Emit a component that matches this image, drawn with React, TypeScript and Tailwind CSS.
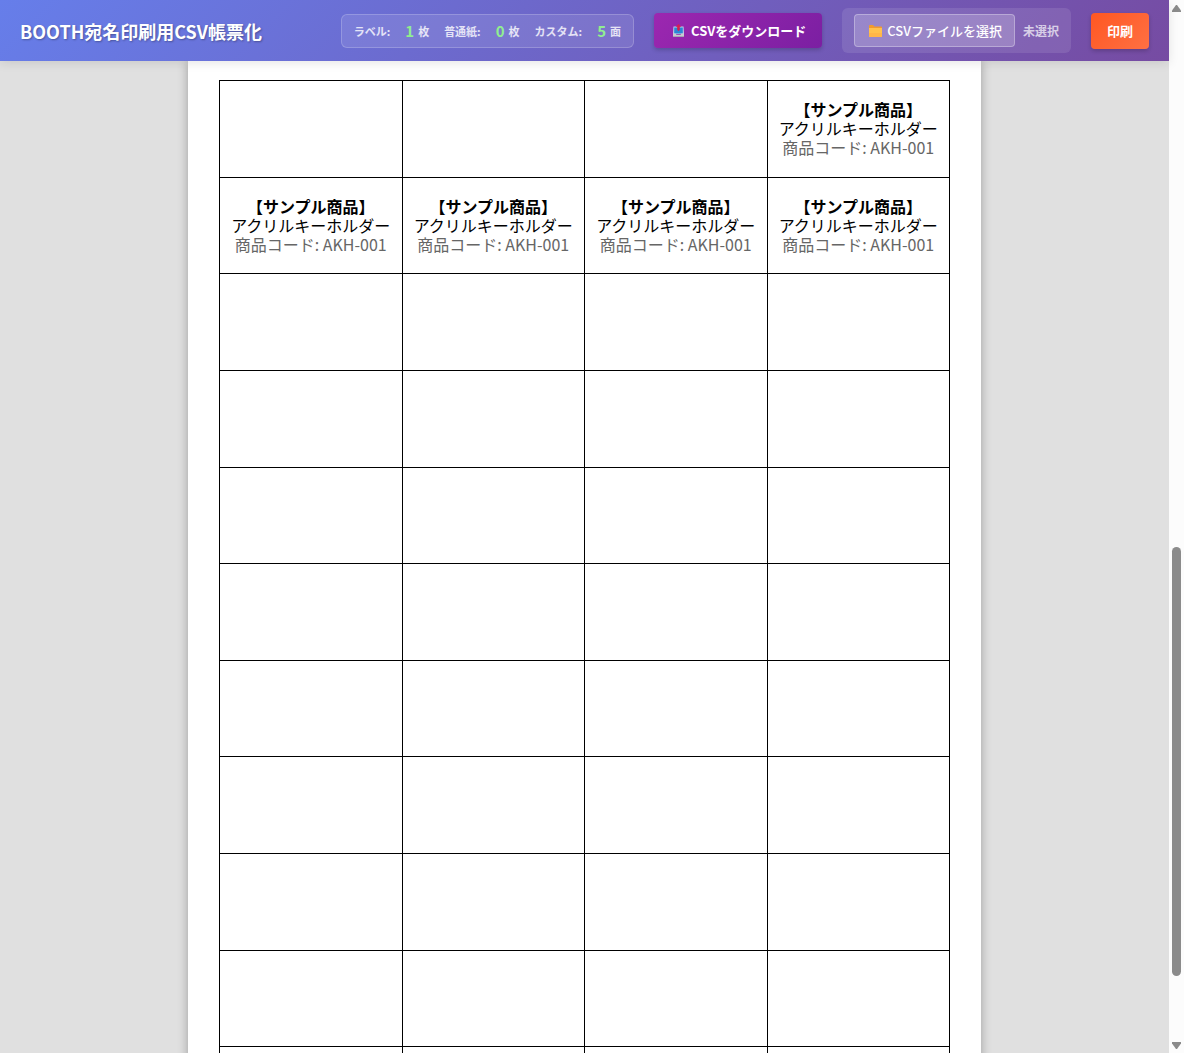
const COLUMNS = 4;
const ROWS = 11;
const SKIPPED = 3;
const CUSTOM_LABELS = 5;

const counts = [
  { label: "ラベル:", value: 1, unit: "枚" },
  { label: "普通紙:", value: 0, unit: "枚" },
  { label: "カスタム:", value: 5, unit: "面" },
];

function OutboxIcon() {
  return (
    <svg className="h-[13px] w-[11px]" viewBox="0 0 11 13" aria-hidden="true">
      <path d="M.5 2.500h10L11 10H0z" fill="#b9d3ea" />
      <path d="M1.200 3.500h8.600V9.500H1.200z" fill="#2b86d6" />
      <path d="M0 9.500h2.500l1 1.200h4l1-1.200H11V13H0z" fill="#c9c9d0" />
      <path d="M0 12h11v1H0z" fill="#a5a7b4" />
      <path d="M5.500 0 8.200 2.800H6.800V6L5.500 7 4.200 6V2.800H2.800z" fill="#d81f4f" />
    </svg>
  );
}

function FolderIcon() {
  return (
    <svg className="h-3 w-[13px]" viewBox="0 0 13 12" aria-hidden="true">
      <path d="M0 .7Q0 0 .7 0H4l1.400 1.500h6.900q.7 0 .7.7V5H0z" fill="#f19a2e" />
      <path d="M0 3h13v8.300q0 .7-.7.7H.7q-.7 0-.7-.7z" fill="#ffc14d" />
      <path d="M0 8h13v3.300q0 .7-.7.7H.7q-.7 0-.7-.7z" fill="#ffb648" />
    </svg>
  );
}

function Header() {
  return (
    <header className="relative z-10 flex items-center justify-between bg-[linear-gradient(135deg,#667eea_0%,#764ba2_100%)] px-5 py-2 text-white shadow-[0_2px_10px_rgba(0,0,0,0.1)]">
      <h1 className="text-lg font-bold whitespace-nowrap [text-shadow:1px_1px_2px_rgba(0,0,0,0.3)]">
        BOOTH宛名印刷用CSV帳票化
      </h1>
      <div className="flex items-center gap-5 whitespace-nowrap">
        <dl className="flex h-[34px] items-center gap-[15px] rounded-md border border-white/20 bg-white/10 px-3 pt-[2px] text-[11px] font-bold text-white/80">
          {counts.map((c) => (
            <div key={c.label} className="flex items-center gap-[15px]">
              <dt>{c.label}</dt>
              <dd className="flex items-center gap-1">
                <span className="text-[15px] text-[#90ee90]">{c.value}</span>
                <span>{c.unit}</span>
              </dd>
            </div>
          ))}
        </dl>
        <button
          type="button"
          className="flex h-[35px] items-center gap-[7px] rounded bg-[linear-gradient(135deg,#9c27b0,#7b1fa2)] pr-4 pl-[19px] text-[13px] font-bold shadow-[0_2px_4px_rgba(0,0,0,0.2)]"
        >
          <OutboxIcon />
          CSVをダウンロード
        </button>
        <div className="flex items-center gap-2 rounded-md bg-white/10 px-3 py-[6px]">
          <button
            type="button"
            className="flex h-[33px] items-center gap-[5px] rounded border border-white/30 bg-white/20 pr-3 pl-[14px] text-[13px] font-medium"
          >
            <FolderIcon />
            CSVファイルを選択
          </button>
          <span className="text-xs font-bold text-white/70">未選択</span>
        </div>
        <button
          type="button"
          className="h-9 rounded bg-[linear-gradient(135deg,#ff5722,#ff7043)] px-4 text-[13px] font-bold shadow-[0_2px_4px_rgba(0,0,0,0.2)]"
        >
          印刷
        </button>
      </div>
    </header>
  );
}

function ProductLabel() {
  return (
    <p className="text-center text-base leading-[19px]">
      <strong className="font-bold">【サンプル商品】</strong>
      <br />
      アクリルキーホルダー
      <br />
      <span className="text-[#666]">商品コード: AKH-001</span>
    </p>
  );
}

function LabelSheet() {
  return (
    <section className="mx-auto w-full max-w-[793px] bg-white px-[31px] pt-[19px] pb-8 shadow-[0_0_10px_rgba(0,0,0,0.3)]">
      <ul className="grid h-[1064px] grid-cols-4 grid-rows-11 border-r border-b border-black">
        {Array.from({ length: COLUMNS * ROWS }, (_, i) => (
          <li key={i} className="flex min-h-0 items-center justify-center border-t border-l border-black">
            {i >= SKIPPED && i < SKIPPED + CUSTOM_LABELS && <ProductLabel />}
          </li>
        ))}
      </ul>
    </section>
  );
}

function ScrollTrack() {
  return (
    <div className="flex w-[15px] shrink-0 flex-col items-center bg-[#fcfcfc] pt-1 pb-1" aria-hidden="true">
      <svg className="h-2 w-[9px]" viewBox="0 0 9 8">
        <path d="M4 1h1l4 5.500V8H0V6.500z" fill="#8b8b8b" />
      </svg>
      <div className="flex-[535]" />
      <div className="w-[9px] flex-[429] rounded-full bg-[#8b8b8b]" />
      <div className="flex-[66]" />
      <svg className="h-[7px] w-[9px]" viewBox="0 0 9 7">
        <path d="M0 0h9v1.500L5 7H4L0 1.500z" fill="#8b8b8b" />
      </svg>
    </div>
  );
}

export default function App() {
  return (
    <div
      lang="ja"
      className="flex h-screen overflow-hidden bg-[#e0e0e0] font-['Noto_Sans_CJK_JP',sans-serif] text-black"
    >
      <div className="min-w-0 flex-1">
        <Header />
        <main>
          <LabelSheet />
        </main>
      </div>
      <ScrollTrack />
    </div>
  );
}
